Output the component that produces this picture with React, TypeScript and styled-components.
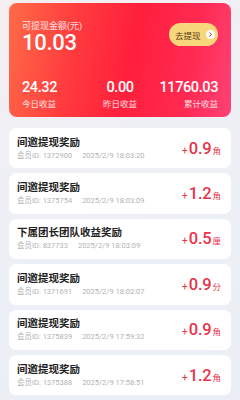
import React from "react";
import styled, { createGlobalStyle } from "styled-components";

const Global = createGlobalStyle`
  html, body { margin: 0; padding: 0; }
  body {
    background: linear-gradient(160deg, #f6eef1 0%, #eef0f6 40%, #ebeef6 100%);
    font-family: "Roboto", "Noto Sans CJK SC", sans-serif;
    width: 240px;
    height: 400px;
    overflow: hidden;
  }
`;

const Page = styled.div`
  display: flex;
  flex-direction: column;
  padding: 3px 9px 0 9px;
  gap: 11px;
`;

const Hero = styled.div`
  height: 114px;
  box-sizing: border-box;
  border-radius: 8px;
  background: linear-gradient(100deg, #ff6b48 0%, #ff3a3e 30%, #ff1f3c 55%, #ff2a52 80%, #ff4275 100%);
  padding: 17px 13px 0 13px;
  color: #fff;
  display: flex;
  flex-direction: column;
`;

const HeroTop = styled.div`
  display: flex;
  justify-content: space-between;
  align-items: flex-start;
`;

const Balance = styled.div`
  display: flex;
  flex-direction: column;
`;

const Caption = styled.div`
  font-size: 9px;
  line-height: 12px;
  opacity: 0.85;
`;

const BigNum = styled.div`
  font-size: 22px;
  line-height: 22px;
  font-weight: 500;
  letter-spacing: -0.3px;
`;

const WithdrawBtn = styled.div`
  margin-top: 3px;
  height: 23px;
  width: 49px;
  box-sizing: border-box;
  border-radius: 12px;
  background: #f8d77c;
  display: flex;
  align-items: center;
  justify-content: space-between;
  padding: 0 3px 0 6px;
  color: #5b3a18;
  font-size: 8.5px;
  white-space: nowrap;
`;

const Dot = styled.span`
  flex-shrink: 0;
  width: 9px;
  height: 9px;
  border-radius: 50%;
  background: #fff;
  display: flex;
  align-items: center;
  justify-content: center;
`;

const Stats = styled.div`
  display: grid;
  grid-template-columns: 1fr 1fr 1fr;
  margin-top: 26px;
`;

const Stat = styled.div<{ $align: "left" | "center" | "right" }>`
  display: flex;
  flex-direction: column;
  text-align: ${(p) => p.$align};
`;

const StatNum = styled.div`
  font-size: 14.5px;
  line-height: 16px;
  font-weight: 500;
  letter-spacing: -0.4px;
`;

const StatLabel = styled.div`
  font-size: 8.5px;
  line-height: 11px;
  margin-top: 3px;
  opacity: 0.85;
`;

const List = styled.div`
  display: flex;
  flex-direction: column;
  gap: 5px;
`;

const Item = styled.div`
  height: 40.4px;
  box-sizing: border-box;
  border-radius: 7px;
  background: #fff;
  display: flex;
  align-items: center;
  justify-content: space-between;
  padding: 0 10px 0 8px;
`;

const Info = styled.div`
  display: flex;
  flex-direction: column;
`;

const Title = styled.div`
  font-size: 10.5px;
  line-height: 13px;
  font-weight: 700;
  color: #222;
`;

const Meta = styled.div`
  margin-top: 1px;
  font-size: 7.5px;
  line-height: 11px;
  color: #b2b2b7;
  display: flex;
  gap: 10px;
`;

const Amount = styled.div`
  display: flex;
  align-items: baseline;
  color: #e7334b;
`;

const Sign = styled.span`
  font-size: 10px;
  margin-right: 1px;
`;

const Value = styled.span`
  font-size: 16.5px;
  font-weight: 500;
  letter-spacing: -0.2px;
`;

const Unit = styled.span`
  font-size: 8.5px;
  margin-left: 1px;
`;

const records = [
  { title: "间邀提现奖励", id: "1372900", time: "2025/2/9 18:03:20", v: "0.9", u: "角" },
  { title: "间邀提现奖励", id: "1375754", time: "2025/2/9 18:03:09", v: "1.2", u: "角" },
  { title: "下属团长团队收益奖励", id: "837733", time: "2025/2/9 18:03:09", v: "0.5", u: "厘" },
  { title: "间邀提现奖励", id: "1371691", time: "2025/2/9 18:02:07", v: "0.9", u: "分" },
  { title: "间邀提现奖励", id: "1375839", time: "2025/2/9 17:59:32", v: "0.9", u: "角" },
  { title: "间邀提现奖励", id: "1375388", time: "2025/2/9 17:58:51", v: "1.2", u: "角" },
];

export default function App() {
  return (
    <>
      <Global />
      <Page>
        <Hero>
          <HeroTop>
            <Balance>
              <Caption>可提现金额(元)</Caption>
              <BigNum>10.03</BigNum>
            </Balance>
            <WithdrawBtn>
              <span>去提现</span>
              <Dot>
                <svg width="5" height="5" viewBox="0 0 6 6">
                  <path d="M2 1 L4 3 L2 5" fill="none" stroke="#4a3218" strokeWidth="1.1" strokeLinecap="round" strokeLinejoin="round" />
                </svg>
              </Dot>
            </WithdrawBtn>
          </HeroTop>
          <Stats>
            <Stat $align="left">
              <StatNum>24.32</StatNum>
              <StatLabel>今日收益</StatLabel>
            </Stat>
            <Stat $align="center">
              <StatNum>0.00</StatNum>
              <StatLabel>昨日收益</StatLabel>
            </Stat>
            <Stat $align="right">
              <StatNum>11760.03</StatNum>
              <StatLabel>累计收益</StatLabel>
            </Stat>
          </Stats>
        </Hero>
        <List>
          {records.map((r, i) => (
            <Item key={i}>
              <Info>
                <Title>{r.title}</Title>
                <Meta>
                  <span>会员ID: {r.id}</span>
                  <span>{r.time}</span>
                </Meta>
              </Info>
              <Amount>
                <Sign>+</Sign>
                <Value>{r.v}</Value>
                <Unit>{r.u}</Unit>
              </Amount>
            </Item>
          ))}
        </List>
      </Page>
    </>
  );
}
